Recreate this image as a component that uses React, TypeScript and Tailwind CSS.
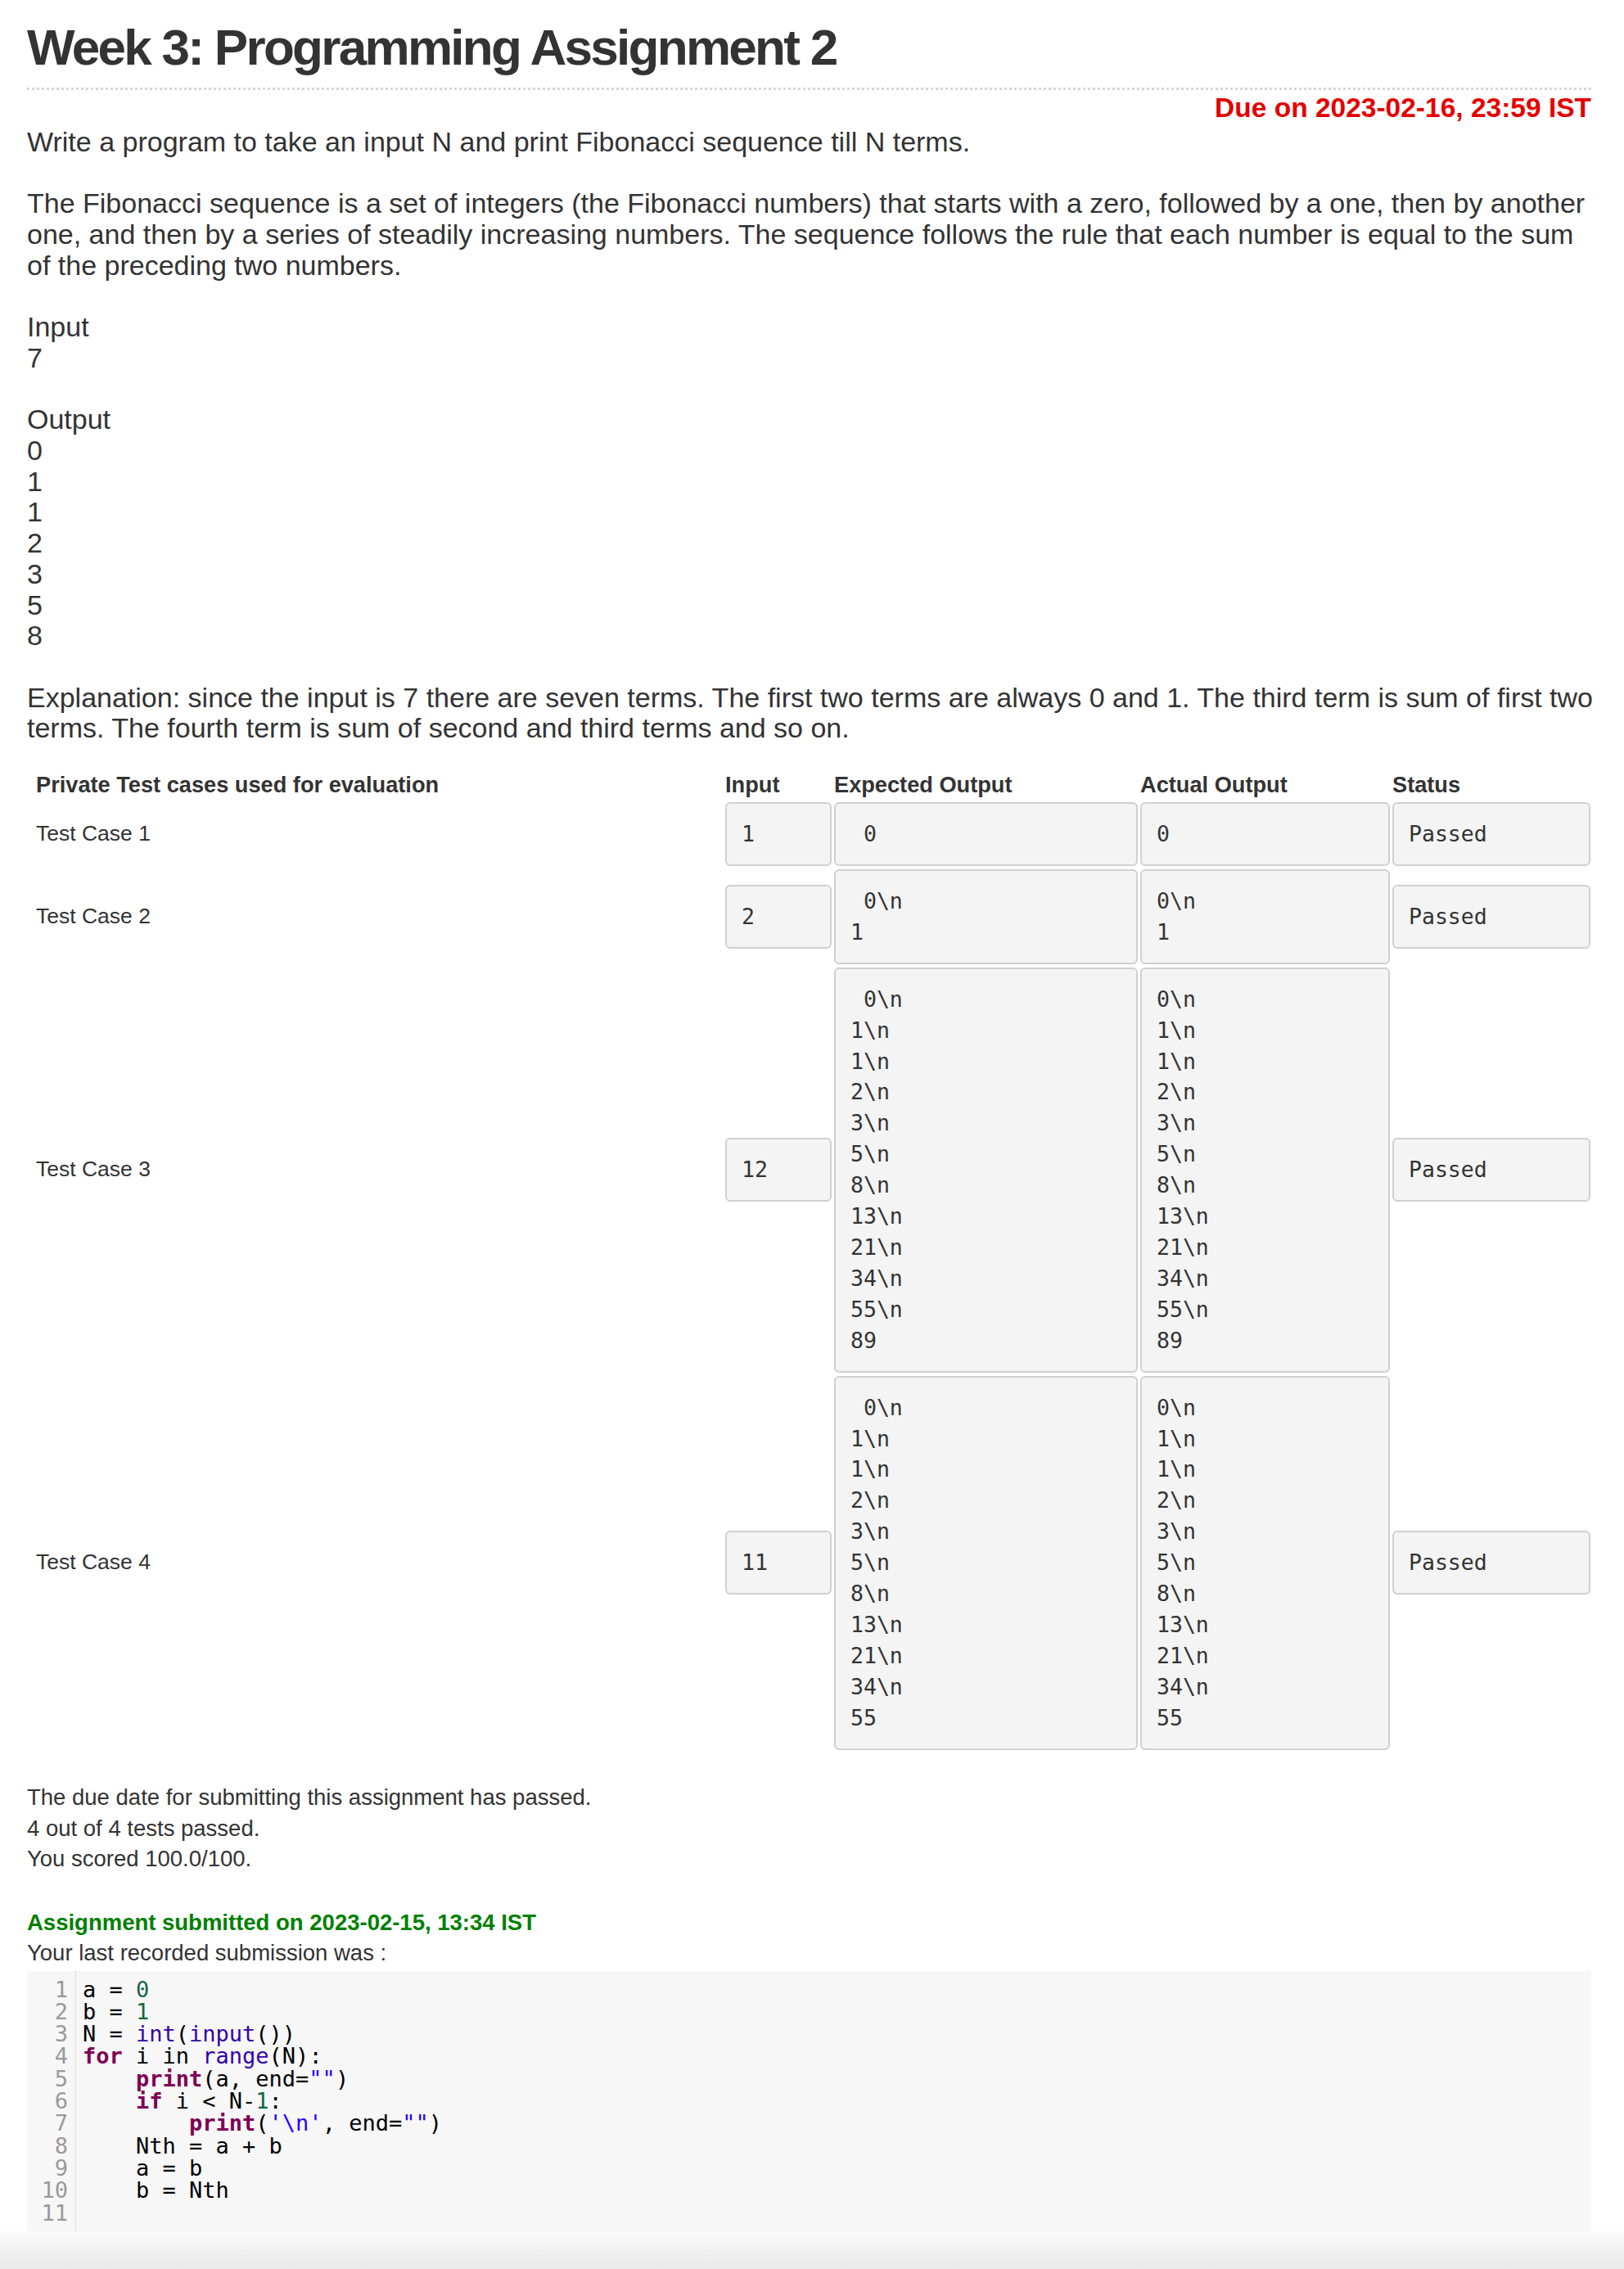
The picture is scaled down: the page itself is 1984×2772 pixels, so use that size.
const sans = "font-['Liberation_Sans',Arial,Helvetica,sans-serif]"
const mono = "font-['DejaVu_Sans_Mono',Menlo,monospace]"

const boxClass = `rounded-[6px] border-2 border-[#d0d0d0] bg-[#f4f4f4] px-[18px] py-[18px] text-[26.5px] leading-[37.9px] whitespace-pre text-[#333] ${mono}`

const fib = ["0", "1", "1", "2", "3", "5", "8", "13", "21", "34", "55", "89"]

function joinOut(nums: string[]) {
  return nums.map((n, i) => (i < nums.length - 1 ? n + "\\n" : n)).join("\n")
}

const cases = [
  { label: "Test Case 1", input: "1", expected: " 0", actual: "0" },
  { label: "Test Case 2", input: "2", expected: " " + joinOut(["0", "1"]), actual: joinOut(["0", "1"]) },
  { label: "Test Case 3", input: "12", expected: " " + joinOut(fib), actual: joinOut(fib) },
  { label: "Test Case 4", input: "11", expected: " " + joinOut(fib.slice(0, 11)), actual: joinOut(fib.slice(0, 11)) },
]

const Kw = ({ children }: { children: React.ReactNode }) => <span className="font-bold text-[#7f0055]">{children}</span>
const Bi = ({ children }: { children: React.ReactNode }) => <span className="text-[#3300aa]">{children}</span>
const Num = ({ children }: { children: React.ReactNode }) => <span className="text-[#116644]">{children}</span>
const Str = ({ children }: { children: React.ReactNode }) => <span className="text-[#2a00ff]">{children}</span>

const codeLines: React.ReactNode[] = [
  <>a = <Num>0</Num></>,
  <>b = <Num>1</Num></>,
  <>N = <Bi>int</Bi>(<Bi>input</Bi>())</>,
  <><Kw>for</Kw> i in <Bi>range</Bi>(N):</>,
  <>    <Kw>print</Kw>(a, end=<Str>""</Str>)</>,
  <>    <Kw>if</Kw> i &lt; N-<Num>1</Num>:</>,
  <>        <Kw>print</Kw>(<Str>'\n'</Str>, end=<Str>""</Str>)</>,
  <>    Nth = a + b</>,
  <>    a = b</>,
  <>    b = Nth</>,
  <>{" "}</>,
]

export default function App() {
  return (
    <div className={`min-h-[2772px] flex flex-col bg-white text-[#333] ${sans}`}>
      <div className="flex-1 pl-[33px] pr-[40px]">
        <h1 className="pt-[25px] text-[62px] leading-[66px] font-bold tracking-[-2.7px]">
          Week 3: Programming Assignment 2
        </h1>
        <div className="mt-[16px] h-[3px] bg-[repeating-linear-gradient(to_right,#d6d6d6_0px,#d6d6d6_3px,transparent_3px,transparent_6px)]" />
        <div className="mt-[3px] h-[42px] text-right text-[33.5px] leading-[37.5px] font-bold text-[#e50000]">
          Due on 2023-02-16, 23:59 IST
        </div>

        <div className="text-[34px] leading-[37.7px] whitespace-nowrap">
          <p>Write a program to take an input N and print Fibonacci sequence till N terms.</p>
          <p className="mt-[37.7px]">
            The Fibonacci sequence is a set of integers (the Fibonacci numbers) that starts with a zero, followed by a one, then by another
            <br />
            one, and then by a series of steadily increasing numbers. The sequence follows the rule that each number is equal to the sum
            <br />
            of the preceding two numbers.
          </p>
          <div className="mt-[37.7px]">
            <p>Input</p>
            <p>7</p>
          </div>
          <div className="mt-[37.7px]">
            <p>Output</p>
            {["0", "1", "1", "2", "3", "5", "8"].map((n, i) => (
              <p key={i}>{n}</p>
            ))}
          </div>
          <p className="mt-[37.7px]">
            Explanation: since the input is 7 there are seven terms. The first two terms are always 0 and 1. The third term is sum of first two
            <br />
            terms. The fourth term is sum of second and third terms and so on.
          </p>
        </div>

        <div className="mt-[33px] grid grid-cols-[850px_130px_371px_305px_242px] gap-x-[3px] gap-y-[4px] items-center text-[27.2px]">
          <div className="pl-[11px] font-bold leading-[34px]">Private Test cases used for evaluation</div>
          <div className="font-bold leading-[34px]">Input</div>
          <div className="font-bold leading-[34px]">Expected Output</div>
          <div className="font-bold leading-[34px]">Actual Output</div>
          <div className="font-bold leading-[34px]">Status</div>

          {cases.map((c) => (
            <div key={c.label} className="contents">
              <div className="pl-[11px] text-[26.5px] leading-[37.5px]">{c.label}</div>
              <div className={boxClass}>{c.input}</div>
              <div className={`${boxClass} self-stretch`}>{c.expected}</div>
              <div className={`${boxClass} self-stretch`}>{c.actual}</div>
              <div className={boxClass}>Passed</div>
            </div>
          ))}
        </div>

        <div className="mt-[39.5px] text-[27.5px] leading-[37.5px]">
          <p>The due date for submitting this assignment has passed.</p>
          <p>4 out of 4 tests passed.</p>
          <p>You scored 100.0/100.</p>
        </div>

        <div className="mt-[40px] text-[27.5px] leading-[37.5px]">
          <p className="font-bold text-[#008000]">Assignment submitted on 2023-02-15, 13:34 IST</p>
          <p>Your last recorded submission was :</p>
        </div>

        <div className={`mt-[3px] flex bg-[#f7f7f7] text-[27px] leading-[27.3px] ${mono}`}>
          <div className="w-[60px] shrink-0 border-r border-[#dddddd] py-[9px] pr-[9px] text-right text-[#999]">
            {codeLines.map((_, i) => (
              <div key={i}>{i + 1}</div>
            ))}
          </div>
          <div className="py-[9px] pl-[8px] text-black whitespace-pre">
            {codeLines.map((l, i) => (
              <div key={i}>{l}</div>
            ))}
          </div>
        </div>
      </div>
      <div className="h-[46px] bg-gradient-to-b from-[#fafafa] to-[#e9e9e9]" />
    </div>
  )
}
